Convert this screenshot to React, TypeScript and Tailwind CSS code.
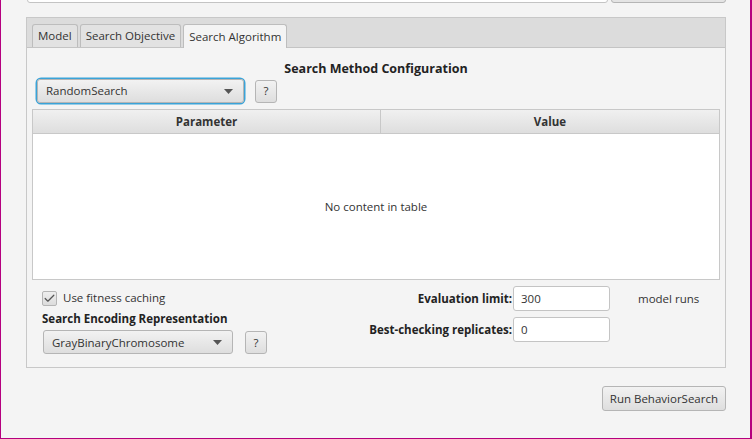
import { Check } from "lucide-react";

function Combo({ label, width }: { label: string; width: string }) {
  return (
    <div
      className={`${width} h-[24px] flex items-center justify-between pl-[8px] pr-[10px] rounded-[3px] border border-[#b5b5b5] bg-gradient-to-b from-[#f2f2f2] to-[#dedede] text-[11.5px] text-[#333]`}
    >
      <span>{label}</span>
      <svg width="9" height="5" viewBox="0 0 9 5">
        <path d="M0 0 H9 L4.5 5 Z" fill="#555" />
      </svg>
    </div>
  );
}

function HelpButton() {
  return (
    <div className="w-[22px] h-[23px] flex items-center justify-center rounded-[3px] border border-[#b5b5b5] bg-gradient-to-b from-[#f2f2f2] to-[#dedede] text-[11.5px] text-[#333]">
      ?
    </div>
  );
}

export default function App() {
  return (
    <div
      className="w-[752px] h-[439px] overflow-hidden bg-[#f4f4f4] border-l border-r-2 border-b border-[#b5007f] flex flex-col text-[11.5px]"
      style={{ fontFamily: '"Open Sans", "Noto Sans", sans-serif' }}
    >
      {/* cut-off top row */}
      <div className="flex gap-[3px] pl-[26px] -mt-[22px] h-[25px] shrink-0">
        <div className="w-[581px] h-[25px] rounded-[3px] border border-[#c4c4c4] bg-white" />
        <div className="w-[115px] h-[25px] rounded-[3px] border border-[#b5b5b5] bg-[#e4e4e4]" />
      </div>

      {/* tab pane */}
      <div className="mt-[14px] ml-[25px] w-[700px] h-[351px] border border-[#c8c8c8] flex flex-col">
        <div className="h-[30px] bg-[#dcdcdc] border-b border-[#c4c4c4] flex items-end pl-[5px] gap-[2px] shrink-0">
          <div className="h-[23px] px-[5px] flex items-center rounded-t-[3px] border border-b-0 border-[#bdbdbd] bg-[#e2e2e2] text-[#333]">
            Model
          </div>
          <div className="h-[23px] px-[5px] flex items-center rounded-t-[3px] border border-b-0 border-[#bdbdbd] bg-[#e2e2e2] text-[#333]">
            Search Objective
          </div>
          <div className="h-[24px] -mb-px px-[5px] flex items-center rounded-t-[3px] border border-b-0 border-[#bdbdbd] bg-[#f4f4f4] text-[#333]">
            Search Algorithm
          </div>
        </div>

        <div className="flex flex-col px-[5px]">
          <div className="h-[28px] flex items-end justify-center text-[12.5px] font-bold text-[#222] leading-none pb-[1px]">
            Search Method Configuration
          </div>
          <div className="flex items-center gap-[11px] pl-[5px] mt-[3px]">
            <div className="rounded-[4px] ring-[1.5px] ring-[#3aa3d8]">
              <Combo label="RandomSearch" width="w-[207px]" />
            </div>
            <HelpButton />
          </div>

          {/* table */}
          <div className="mt-[6px] h-[171px] border border-[#c8c8c8] bg-white flex flex-col">
            <div className="h-[24px] flex border-b border-[#c8c8c8] bg-gradient-to-b from-[#f0f0f0] to-[#dedede] font-bold text-[#333] shrink-0">
              <div className="w-[348px] flex items-center justify-center border-r border-[#c8c8c8]">
                Parameter
              </div>
              <div className="flex-1 flex items-center justify-center">Value</div>
            </div>
            <div className="flex-1 flex items-center justify-center text-[#333]">
              No content in table
            </div>
          </div>

          {/* settings */}
          <div className="flex mt-[6px]">
            <div className="w-[330px] flex flex-col pl-[10px]">
              <div className="flex items-center gap-[6px] h-[24px]">
                <div className="w-[15px] h-[15px] rounded-[2px] border border-[#b5b5b5] bg-gradient-to-b from-[#eee] to-[#dcdcdc] flex items-center justify-center">
                  <Check size={13} strokeWidth={2.25} className="text-[#555]" />
                </div>
                <span className="text-[#333]">Use fitness caching</span>
              </div>
              <div className="font-bold text-[#222]">
                Search Encoding Representation
              </div>
              <div className="flex items-center gap-[12px] mt-[3px] pl-[1px]">
                <Combo label="GrayBinaryChromosome" width="w-[190px]" />
                <HelpButton />
              </div>
            </div>
            <div className="flex flex-col gap-[6px]">
              <div className="flex items-center">
                <span className="w-[150px] text-right font-bold text-[#222]">
                  Evaluation limit:
                </span>
                <div className="ml-[1px] w-[97px] h-[25px] rounded-[3px] border border-[#c4c4c4] bg-white flex items-center px-[7px] text-[#333]">
                  300
                </div>
                <span className="ml-[28px] text-[#333]">model runs</span>
              </div>
              <div className="flex items-center">
                <span className="w-[150px] text-right font-bold text-[#222]">
                  Best-checking replicates:
                </span>
                <div className="ml-[1px] w-[97px] h-[25px] rounded-[3px] border border-[#c4c4c4] bg-white flex items-center px-[7px] text-[#333]">
                  0
                </div>
              </div>
            </div>
          </div>
        </div>
      </div>

      <div className="flex justify-end pr-[24px] mt-[18px]">
        <div className="h-[25px] px-[7px] flex items-center rounded-[3px] border border-[#b5b5b5] bg-gradient-to-b from-[#f2f2f2] to-[#dedede] text-[#333]">
          Run BehaviorSearch
        </div>
      </div>
    </div>
  );
}
